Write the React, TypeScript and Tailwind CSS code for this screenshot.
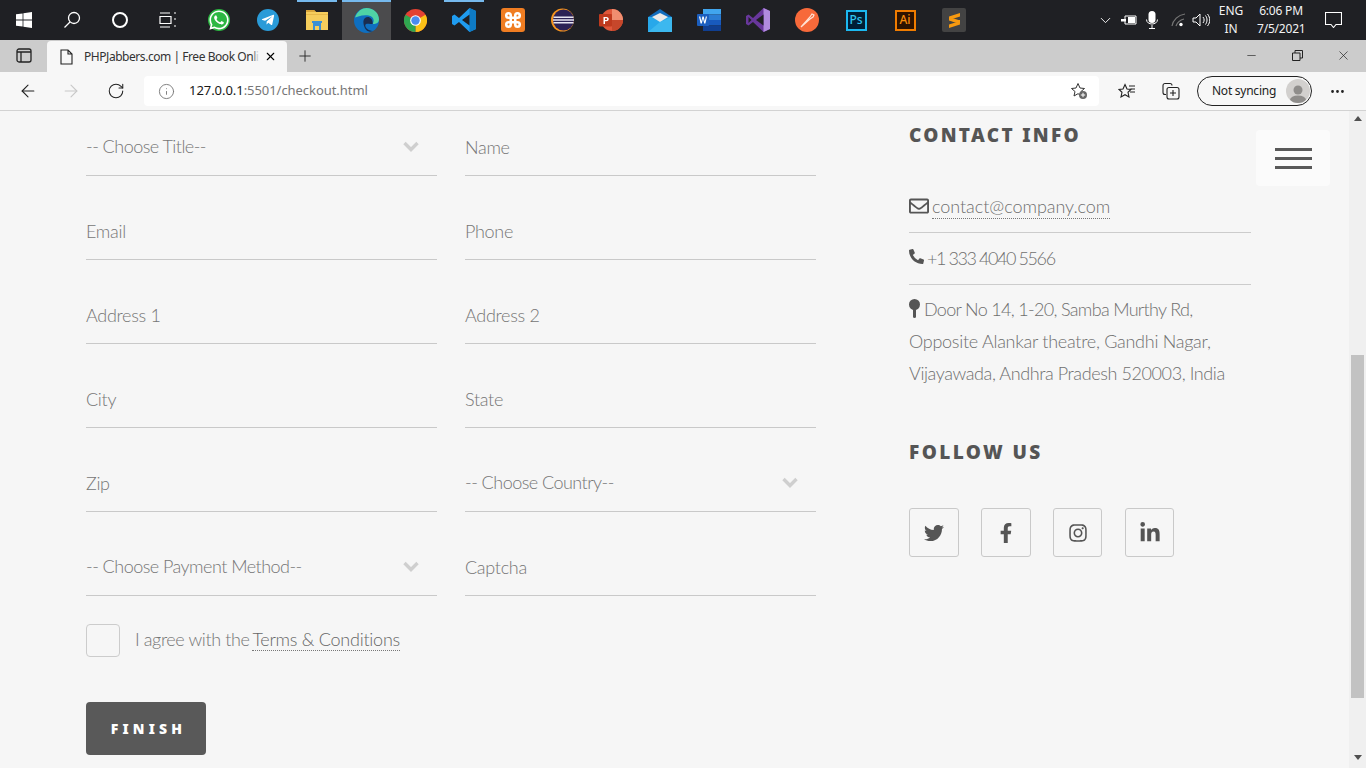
import { FaTwitter, FaFacebookF, FaInstagram, FaLinkedinIn, FaRegEnvelope, FaPhoneAlt, FaWhatsapp, FaTelegramPlane } from "react-icons/fa";
import { ArrowLeft, ArrowRight, RotateCw, Info, Minus, X, Plus, MoreHorizontal, ChevronDown } from "lucide-react";

const body = "font-['Lato','Liberation_Sans',sans-serif] font-light";
const ui = "font-['Noto_Sans','Liberation_Sans',sans-serif]";
const heavy = "font-['Noto_Sans','Liberation_Sans',sans-serif] font-black";

function TaskApp({ children, active, lit }: { children: React.ReactNode; active?: boolean; lit?: boolean }) {
  return (
    <div className={`relative flex h-10 w-[49px] items-center justify-center ${lit ? "bg-[#4b4b4d]" : ""}`}>
      {active && <div className="absolute left-[4px] right-[5px] top-0 h-[2px] bg-[#76b9ed]" />}
      {lit && <div className="absolute inset-x-0 top-0 h-[2px] bg-[#76b9ed]" />}
      {children}
    </div>
  );
}

function Taskbar() {
  return (
    <div className="flex h-10 items-center bg-[#1f2024] text-white">
      <div className="flex h-10 w-12 items-center justify-center">
        <svg width="16" height="16" viewBox="0 0 16 16" fill="#fff">
          <path d="M0 2.3 6.6 1.4V7.6H0zM7.4 1.3 16 0V7.6H7.4zM0 8.4H6.6V14.6L0 13.7zM7.4 8.4H16V16L7.4 14.7z" />
        </svg>
      </div>
      <div className="flex h-10 w-12 items-center justify-center">
        <svg width="18" height="18" viewBox="0 0 18 18" fill="none" stroke="#fff" strokeWidth="1.3">
          <circle cx="11" cy="7" r="5.5" />
          <path d="M7 11 1.5 16.5" />
        </svg>
      </div>
      <div className="flex h-10 w-12 items-center justify-center">
        <div className="h-4 w-4 rounded-full border-[2.5px] border-white" />
      </div>
      <div className="flex h-10 w-12 items-center justify-center">
        <svg width="18" height="16" viewBox="0 0 18 16" fill="none" stroke="#fff" strokeWidth="1.2">
          <path d="M1 1h10M1 15h10M1 4.5h11v7H1zM15 1h2M15 7h2M15 14h2" />
        </svg>
      </div>
      <div className="w-[2.5px]" />
      <TaskApp>
        <div className="relative flex h-[22px] w-[22px] items-center justify-center rounded-full bg-[#2cb742]">
          <FaWhatsapp className="text-[22px] text-white" />
        </div>
      </TaskApp>
      <TaskApp>
        <div className="flex h-[22px] w-[22px] items-center justify-center rounded-full bg-[#2a9bd8]">
          <FaTelegramPlane className="text-[14px] text-white" />
        </div>
      </TaskApp>
      <TaskApp active>
        <svg width="22" height="20" viewBox="0 0 22 20">
          <path d="M0 0h8l2 2h12v18H0z" fill="#f5cd5c" />
          <path d="M0 0h8l2 2H0z" fill="#d9a53a" />
          <path d="M0 4h22v1H0z" fill="#e6b84a" />
          <path d="M7 13h8v7h-2v-4H9v4H7z" fill="#3a8fd6" />
          <path d="M6 11h10v2H6z" fill="#3a8fd6" />
        </svg>
      </TaskApp>
      <TaskApp lit>
        <svg width="25" height="25" viewBox="0 0 24 24">
          <circle cx="12" cy="12" r="12" fill="#0f6fc0" />
          <path d="M1 9C3 3 8 0 12 0c7 0 12 5 12 11 0 3-3 5-6 4 3-5-2-9-7-8-5 0-8 2-10 2z" fill="#4fd3a5" />
          <path d="M9 13c0-3 3-5 6-4 2 1 3 3 3 6-3 1-6-1-7 1s2 6 7 6c-6 3-9-4-9-9z" fill="#1a2d4f" />
        </svg>
      </TaskApp>
      <TaskApp>
        <svg width="23" height="23" viewBox="0 0 24 24">
          <circle cx="12" cy="12" r="12" fill="#e34133" />
          <path d="M12 12 22.4 6A12 12 0 0 1 12 24z" fill="#fbc116" />
          <path d="M12 12 12 24A12 12 0 0 1 1.6 6z" fill="#2fa650" />
          <circle cx="12" cy="12" r="5.6" fill="#fff" />
          <circle cx="12" cy="12" r="4.4" fill="#4a8bf0" />
        </svg>
      </TaskApp>
      <TaskApp active>
        <svg width="24" height="24" viewBox="0 0 24 24">
          <path d="M17.5 0 24 3v18l-6.5 3L7 14l-4.5 3.5L0 16V8l2.5-1.5L7 10z" fill="#1f9cf0" />
          <path d="M17.5 0 24 3v18l-6.5 3z" fill="#0e7ac4" />
          <path d="M17.5 6.5v11L10 12z" fill="#1f2024" />
        </svg>
      </TaskApp>
      <TaskApp>
        <div className="flex h-6 w-6 items-center justify-center rounded-[3px] bg-[#f07d22]">
          <svg width="18" height="18" viewBox="0 0 24 24" fill="none" stroke="#fff" strokeWidth="3.4">
            <path d="M15 6v12a3 3 0 1 0 3-3H6a3 3 0 1 0 3 3V6a3 3 0 1 0-3 3h12a3 3 0 1 0-3-3" />
          </svg>
        </div>
      </TaskApp>
      <TaskApp>
        <svg width="24" height="24" viewBox="0 0 24 24">
          <circle cx="12.5" cy="12" r="11.5" fill="#f7941e" />
          <circle cx="13.5" cy="12" r="10.5" fill="#2c2255" />
          <path d="M3.5 8.5h20v1.6h-20zM3 11.2h21v1.6H3zM3.5 14h20v1.6h-20z" fill="#e8e6f2" />
        </svg>
      </TaskApp>
      <TaskApp>
        <svg width="24" height="22" viewBox="0 0 24 22">
          <circle cx="13" cy="11" r="11" fill="#e0573a" />
          <path d="M13 0a11 11 0 0 1 11 11H13z" fill="#f08e70" />
          <path d="M13 11h11a11 11 0 0 1-11 11z" fill="#c6472b" />
          <rect x="0" y="5" width="13" height="12.5" rx="1" fill="#bf3a1e" />
          <path d="M4.5 8h3c3 0 3 4.2 0 4.2H6V15H4.500zM6 9.300v1.700h1.400c1 0 1-1.700 0-1.700z" fill="#fff" />
        </svg>
      </TaskApp>
      <TaskApp>
        <svg width="24" height="23" viewBox="0 0 24 23">
          <path d="M12 0 24 8v15H0V8z" fill="#0f6cbd" />
          <path d="M0 8h24v15H0z" fill="#28a8ea" />
          <path d="M4 8 12 4l8 4-8 5z" fill="#e9e9e9" />
          <path d="M12 13 24 8v15H0z" fill="#50c8f4" opacity="0.5" />
        </svg>
      </TaskApp>
      <TaskApp>
        <svg width="24" height="22" viewBox="0 0 24 22">
          <path d="M6 0h18v5.500H6z" fill="#41a5ee" />
          <path d="M6 5.500h18V11H6z" fill="#2b7cd3" />
          <path d="M6 11h18v5.500H6z" fill="#185abd" />
          <path d="M6 16.500h18V22H6z" fill="#103f91" />
          <rect x="0" y="5" width="12" height="12" rx="1" fill="#1b5ebe" />
          <path d="M2 7.500h1.300l1 4.800 1.100-4.800h1.300l1.100 4.800 1-4.800H10L8.400 14.500H7.200L6 9.600l-1.200 4.900H3.600z" fill="#fff" />
        </svg>
      </TaskApp>
      <TaskApp>
        <svg width="24" height="24" viewBox="0 0 24 24">
          <path d="M17.500 0 24 3v18l-6.500 3L7 14l-4.500 3.500L0 16V8l2.500-1.500L7 10z" fill="#68379c" />
          <path d="M17.500 0 24 3v18l-6.500 3z" fill="#b18be0" />
          <path d="M17.500 6.500 10 12l7.500 5.500z" fill="#1f2024" />
          <path d="M2.500 9v6l3-3z" fill="#1f2024" />
        </svg>
      </TaskApp>
      <TaskApp>
        <svg width="24" height="24" viewBox="0 0 24 24">
          <circle cx="12" cy="12" r="12" fill="#f7693a" />
          <path d="M6 19 15 9l2-3 2 1-1 2-3 2z" fill="none" stroke="#ffe3d6" strokeWidth="1.2" />
        </svg>
      </TaskApp>
      <TaskApp>
        <div className="flex h-[21px] w-[21px] items-center justify-center border-2 border-[#1cb8f0] bg-[#001e36] font-['Noto_Sans',sans-serif] text-[12px] font-medium leading-none text-[#31c5f0]">
          Ps
        </div>
      </TaskApp>
      <TaskApp>
        <div className="flex h-[21px] w-[21px] items-center justify-center border-2 border-[#f07c00] bg-[#2e1300] font-['Noto_Sans',sans-serif] text-[12px] font-medium leading-none text-[#f88c0a]">
          Ai
        </div>
      </TaskApp>
      <TaskApp>
        <div className="flex h-6 w-6 items-center justify-center rounded-[2px] bg-[#434343]">
          <svg width="13" height="15" viewBox="0 0 13 15" fill="#f79a10">
            <path d="M12 0v3.500L1 7V3.500zM1 7l11 3.500V7zM12 8v3.500L1 15v-3.500z" />
            <path d="M1 4v3.500l11 3.500V7.500z" />
          </svg>
        </div>
      </TaskApp>
      <div className="flex-1" />
      <ChevronDown size={17} className="mr-[7px] text-white" strokeWidth={1.3} />
      <svg width="16" height="12" viewBox="0 0 16 12" fill="none" className="mr-[9px]">
        <path d="M4 2h11v8H4z" stroke="#fff" strokeWidth="1" />
        <path d="M7 3h7v6H7zM0 5h5v2.500H0z" fill="#fff" />
      </svg>
      <svg width="12" height="18" viewBox="0 0 12 18" className="mr-[13px]" fill="none">
        <rect x="2.500" y="0" width="7" height="12" rx="3.500" fill="#fff" />
        <path d="M.5 8.500c0 6 11 6 11 0M6 14v3M3 17.500h6" stroke="#fff" strokeWidth="1" />
      </svg>
      <svg width="16" height="14" viewBox="0 0 16 14" fill="none" className="mr-[5px]">
        <path d="M1 13C2 7 7 2 14 1M5 13c1-3 4-6 8-7" stroke="#777" strokeWidth="1.2" />
        <circle cx="10" cy="11.500" r="1.700" fill="#fff" />
      </svg>
      <svg width="18" height="14" viewBox="0 0 18 14" fill="none" stroke="#fff" strokeWidth="1" className="mr-[8px]">
        <path d="M1 5h3l4-4v12L4 9H1zM11 4c1.500 2 1.500 4 0 6M13.500 2.500c2 3 2 6 0 9M15.500 1c3 4 3 8 0 12" />
      </svg>
      <div className={`${ui} mr-[13px] w-[26px] text-center text-[12px] leading-[18px] text-[#f2f2f2]`}>
        <div>ENG</div>
        <div>IN</div>
      </div>
      <div className={`${ui} mr-[20px] w-[48px] whitespace-nowrap text-center text-[12px] leading-[18px] tracking-[-0.2px] text-[#f2f2f2]`}>
        <div>6:06 PM</div>
        <div>7/5/2021</div>
      </div>
      <svg width="17" height="16" viewBox="0 0 17 16" fill="none" stroke="#fff" strokeWidth="1.1" className="mr-[24px]">
        <path d="M.5.500h16v12h-5.500L8.500 15.500 6 12.500H.5z" />
      </svg>
    </div>
  );
}

function Browser() {
  return (
    <div className={`${ui} text-[12px]`}>
      <div className="flex h-8 items-end bg-[#cccccc]">
        <div className="flex h-8 w-[47px] items-center justify-center pb-[1px]">
          <svg width="16" height="15" viewBox="0 0 16 15" fill="none" stroke="#222" strokeWidth="1.3">
            <rect x="1" y="1" width="14" height="13" rx="2" />
            <path d="M1 4h14M5 4v10" />
          </svg>
        </div>
        <div className="flex h-[31px] w-[240px] items-center rounded-t-[4px] bg-[#f7f7f7] pl-[13px]">
          <svg width="13" height="16" viewBox="0 0 13 16" fill="none" stroke="#222" strokeWidth="1.1">
            <path d="M1 1h7l4 4v10H1zM8 1v4h4" />
          </svg>
          <div className="ml-[11px] w-[176px] overflow-hidden whitespace-nowrap tracking-[-0.45px] text-[#333]">
            PHPJabbers.com | Free Book On<span className="text-[#888]">l</span><span className="text-[#ccc]">i</span>
          </div>
          <X size={13} className="ml-[4px] text-black" strokeWidth={2} />
        </div>
        <div className="flex h-8 w-[36px] items-center justify-center pb-[1px]">
          <Plus size={18} className="text-[#222]" strokeWidth={1.2} />
        </div>
        <div className="flex-1" />
        <div className="flex h-8 w-[46px] items-center justify-center pb-[1px]">
          <Minus size={13} className="text-[#222]" strokeWidth={1.2} />
        </div>
        <div className="flex h-8 w-[46px] items-center justify-center pb-[1px]">
          <svg width="11" height="11" viewBox="0 0 11 11" fill="none" stroke="#222" strokeWidth="1">
            <path d="M.5 3h7.500v7.500H.5zM3 3V.5h7.500V8H8" />
          </svg>
        </div>
        <div className="flex h-8 w-[46px] items-center justify-center pb-[1px]">
          <X size={15} className="text-[#222]" strokeWidth={1.1} />
        </div>
      </div>
      <div className="flex h-[39px] items-center border-b border-[#d2d2d2] bg-[#f7f7f7]">
        <div className="flex w-[56px] justify-center">
          <ArrowLeft size={20} className="text-[#222]" strokeWidth={1.3} />
        </div>
        <div className="flex w-[30px] justify-center">
          <ArrowRight size={20} className="text-[#c8c8c8]" strokeWidth={1.3} />
        </div>
        <div className="flex w-[60px] justify-center">
          <RotateCw size={18} className="text-[#222]" strokeWidth={1.4} />
        </div>
        <div className="-ml-[2px] flex h-[30px] w-[955px] items-center rounded-[4px] bg-white">
          <Info size={17} className="ml-[14px] text-[#777]" strokeWidth={1.3} />
          <div className="ml-[14px] text-[13px] tracking-[-0.05px] text-[#777]">
            <span className="text-[#1a1a1a]">127.0.0.1</span>:5501/checkout.html
          </div>
          <div className="flex-1" />
          <svg width="18" height="18" viewBox="0 0 18 18" fill="none" stroke="#333" strokeWidth="1" className="mr-[11px]">
            <path d="M8 1.500 10 6l4.500.500L11 9.500l1 4.500-4-2.300L4 14l1-4.500L1.500 6.500 6 6z" />
            <circle cx="13" cy="13" r="4" fill="#666" stroke="none" />
            <path d="M13 10.800v4.400M10.800 13h4.400" stroke="#fff" />
          </svg>
        </div>
        <div className="flex w-[56px] justify-center">
          <svg width="18" height="17" viewBox="0 0 18 17" fill="none" stroke="#222" strokeWidth="1.1">
            <path d="M7 1.500 9 6l4 .500-3 2.800 1 4.700-4-2.300L3 14l1-4.700-3-2.800L5 6zM11 3h6M12.500 6H17M12 9h5" />
          </svg>
        </div>
        <div className="flex w-[32px] justify-center">
          <svg width="18" height="18" viewBox="0 0 18 18" fill="none" stroke="#222" strokeWidth="1.1">
            <path d="M4 12.500H3a2 2 0 0 1-2-2V3.500a2 2 0 0 1 2-2h5a2 2 0 0 1 2 2" />
            <rect x="5" y="5.500" width="12" height="11.500" rx="2" />
            <path d="M11 8v6M8 11h6" />
          </svg>
        </div>
        <div className="ml-[10px] flex h-[30px] w-[115px] items-center justify-between rounded-full border border-[#222] pl-[14px] pr-[1px] tracking-[-0.25px] text-[#222]">
          <span>Not syncing</span>
          <div className="flex h-6 w-6 items-end justify-center overflow-hidden rounded-full bg-[#d2d0ce]">
            <svg width="20" height="20" viewBox="0 0 20 20" fill="#8f8d8b">
              <circle cx="10" cy="7" r="4.500" />
              <ellipse cx="10" cy="17" rx="8" ry="4.500" />
            </svg>
          </div>
        </div>
        <MoreHorizontal size={17} className="ml-[17px] text-[#222]" strokeWidth={2} />
      </div>
    </div>
  );
}

function Field({ label, select }: { label: string; select?: boolean }) {
  return (
    <div className="flex h-[56px] items-center justify-between border-b border-[#c9c9c9] pr-[18px] text-[18px] text-[#757575]">
      <span className={select ? "-mt-[2px] tracking-[-0.53px]" : "tracking-[-0.3px]"}>{label}</span>
      {select && (
        <svg width="16" height="11" viewBox="0 0 16 11" fill="none" stroke="#cfcfcf" strokeWidth="3.4" className="-mt-[2px]">
          <path d="M1.500 2 8 8.500 14.500 2" />
        </svg>
      )}
    </div>
  );
}

function CheckoutForm() {
  return (
    <div className="w-[730px] pt-[9px]">
      <div className="grid grid-cols-2 gap-x-[28px] gap-y-[28px]">
        <Field label="-- Choose Title--" select />
        <Field label="Name" />
        <Field label="Email" />
        <Field label="Phone" />
        <Field label="Address 1" />
        <Field label="Address 2" />
        <Field label="City" />
        <Field label="State" />
        <Field label="Zip" />
        <Field label="-- Choose Country--" select />
        <Field label="-- Choose Payment Method--" select />
        <Field label="Captcha" />
      </div>
      <div className="mt-[28px] flex items-center">
        <div className="h-[33px] w-[34px] rounded-[4px] border border-[#cccccc]" />
        <span className="-mt-[2px] ml-[15px] text-[18px] tracking-[-0.4px] text-[#757575]">I agree with the</span>
        <span className="-mt-[2px] ml-[3px] border-b border-dotted border-[#777] text-[18px] leading-[22px] tracking-[-0.25px] text-[#666]">
          Terms &amp; Conditions
        </span>
      </div>
      <button className={`${heavy} mt-[45px] flex h-[53px] w-[120px] items-center justify-center rounded-[4px] bg-[#595959] pl-[5px] text-[14px] tracking-[4.2px] text-white`}>
        FINISH
      </button>
    </div>
  );
}

function Social({ children, wide }: { children: React.ReactNode; wide?: boolean }) {
  return (
    <div className={`flex h-[49px] ${wide ? "w-[50px]" : "w-[49px]"} items-center justify-center rounded-[3px] border border-[#c9c9c9] text-[20px] text-[#555]`}>
      {children}
    </div>
  );
}

function ContactInfo() {
  return (
    <div className="ml-[93px] w-[342px] pt-[9px] text-[18px] text-[#6f6f6f]">
      <h2 className={`${heavy} text-[19px] leading-[30px] tracking-[2.3px] text-[#555]`}>CONTACT INFO</h2>
      <div className="mt-[39px] flex h-[44px] items-start border-b border-[#cccccc] pt-[5px]">
        <FaRegEnvelope className="mt-[2px] text-[20px] text-[#555]" />
        <span className="ml-[3px] border-b border-dotted border-[#777] leading-[24px] tracking-[-0.05px]">contact@company.com</span>
      </div>
      <div className="flex h-[52px] items-center border-b border-[#cccccc]">
        <FaPhoneAlt className="-mt-[4px] text-[15px] text-[#555]" />
        <span className="ml-[3px] tracking-[-1.42px]">+1 333 4040 5566</span>
      </div>
      <div className="pt-[8px] leading-[32px]">
        <div className="flex items-center tracking-[-0.68px]">
          <svg width="11" height="19" viewBox="0 0 11 19" fill="#555" className="mr-[4px] -mt-[1px]">
            <circle cx="5.500" cy="5.500" r="5.500" />
            <rect x="4" y="9" width="3" height="10" rx="1.500" />
          </svg>
          Door No 14, 1-20, Samba Murthy Rd,
        </div>
        <div className="tracking-[-0.27px]">Opposite Alankar theatre, Gandhi Nagar,</div>
        <div className="tracking-[-0.4px]">Vijayawada, Andhra Pradesh 520003, India</div>
      </div>
      <h2 className={`${heavy} mt-[48px] text-[19px] leading-[30px] tracking-[2.4px] text-[#555]`}>FOLLOW US</h2>
      <div className="mt-[41px] flex gap-[22px]">
        <Social wide>
          <FaTwitter />
        </Social>
        <Social wide>
          <FaFacebookF />
        </Social>
        <Social>
          <FaInstagram />
        </Social>
        <div className="ml-[1px]">
          <Social>
            <FaLinkedinIn className="text-[22px]" />
          </Social>
        </div>
      </div>
    </div>
  );
}

export default function App() {
  return (
    <div className="flex h-[768px] flex-col overflow-hidden bg-[#f6f6f6]">
      <Taskbar />
      <Browser />
      <div className="relative flex h-[657px]">
        <div className={`${body} flex flex-1 pl-[86px]`}>
          <CheckoutForm />
          <ContactInfo />
        </div>
        {/* hamburger floats over the page */}
        <div className="absolute left-[1256px] top-[19px] flex h-[56px] w-[74px] flex-col items-center justify-center gap-[6px] rounded-[4px] bg-[#fbfbfb]">
          <div className="h-[3px] w-[37px] bg-[#595959]" />
          <div className="h-[3px] w-[37px] bg-[#595959]" />
          <div className="h-[3px] w-[37px] bg-[#595959]" />
        </div>
        <div className="flex w-[17px] flex-col items-center bg-[#f0f0f0]">
          <div className="mt-[5px] h-0 w-0 border-x-[4.5px] border-b-[5px] border-x-transparent border-b-[#505050]" />
          <div className="mt-[234px] h-[343px] w-[13px] bg-[#c2c2c2]" />
          <div className="mt-[57px] h-0 w-0 border-x-[4.5px] border-t-[5px] border-x-transparent border-t-[#505050]" />
        </div>
      </div>
    </div>
  );
}
